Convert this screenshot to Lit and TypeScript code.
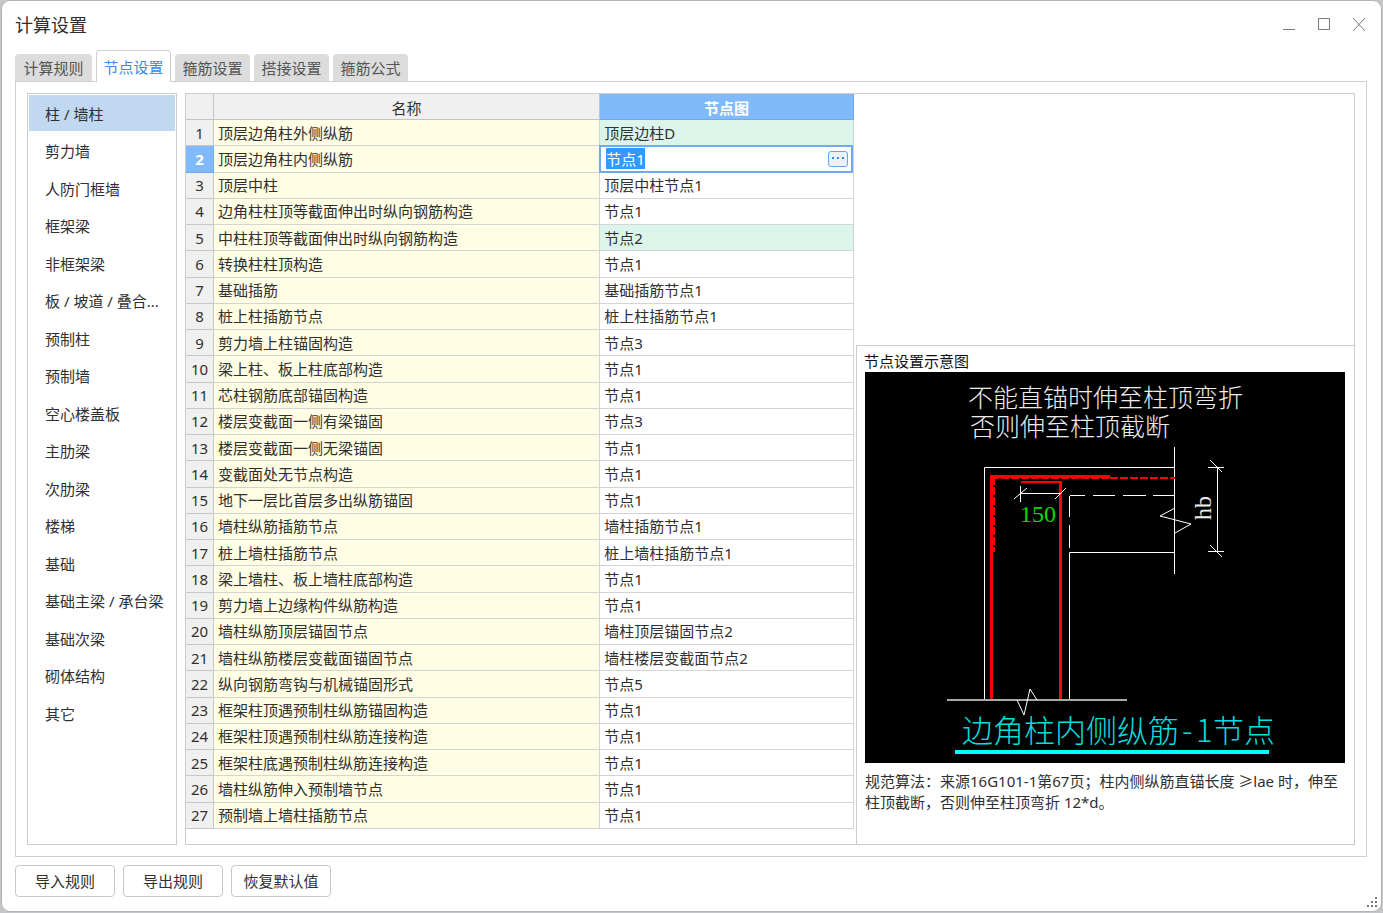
import { LitElement, html, svg, css } from "lit";
import { customElement, state } from "lit/decorators.js";
import { classMap } from "lit/directives/class-map.js";

interface NodeRow {
  name: string;
  node: string;
  changed?: boolean;
}

const TABS = ["计算规则", "节点设置", "箍筋设置", "搭接设置", "箍筋公式"];

const CATEGORIES = [
  "柱 / 墙柱", "剪力墙", "人防门框墙", "框架梁", "非框架梁", "板 / 坡道 / 叠合...",
  "预制柱", "预制墙", "空心楼盖板", "主肋梁", "次肋梁", "楼梯", "基础",
  "基础主梁 / 承台梁", "基础次梁", "砌体结构", "其它",
];

const ROWS: NodeRow[] = [
  { name: "顶层边角柱外侧纵筋", node: "顶层边柱D", changed: true },
  { name: "顶层边角柱内侧纵筋", node: "节点1" },
  { name: "顶层中柱", node: "顶层中柱节点1" },
  { name: "边角柱柱顶等截面伸出时纵向钢筋构造", node: "节点1" },
  { name: "中柱柱顶等截面伸出时纵向钢筋构造", node: "节点2", changed: true },
  { name: "转换柱柱顶构造", node: "节点1" },
  { name: "基础插筋", node: "基础插筋节点1" },
  { name: "桩上柱插筋节点", node: "桩上柱插筋节点1" },
  { name: "剪力墙上柱锚固构造", node: "节点3" },
  { name: "梁上柱、板上柱底部构造", node: "节点1" },
  { name: "芯柱钢筋底部锚固构造", node: "节点1" },
  { name: "楼层变截面一侧有梁锚固", node: "节点3" },
  { name: "楼层变截面一侧无梁锚固", node: "节点1" },
  { name: "变截面处无节点构造", node: "节点1" },
  { name: "地下一层比首层多出纵筋锚固", node: "节点1" },
  { name: "墙柱纵筋插筋节点", node: "墙柱插筋节点1" },
  { name: "桩上墙柱插筋节点", node: "桩上墙柱插筋节点1" },
  { name: "梁上墙柱、板上墙柱底部构造", node: "节点1" },
  { name: "剪力墙上边缘构件纵筋构造", node: "节点1" },
  { name: "墙柱纵筋顶层锚固节点", node: "墙柱顶层锚固节点2" },
  { name: "墙柱纵筋楼层变截面锚固节点", node: "墙柱楼层变截面节点2" },
  { name: "纵向钢筋弯钩与机械锚固形式", node: "节点5" },
  { name: "框架柱顶遇预制柱纵筋锚固构造", node: "节点1" },
  { name: "框架柱顶遇预制柱纵筋连接构造", node: "节点1" },
  { name: "框架柱底遇预制柱纵筋连接构造", node: "节点1" },
  { name: "墙柱纵筋伸入预制墙节点", node: "节点1" },
  { name: "预制墙上墙柱插筋节点", node: "节点1" },
];

const BUTTONS = ["导入规则", "导出规则", "恢复默认值"];

@customElement("node-diagram")
class NodeDiagram extends LitElement {
  static styles = css`
    :host { display: block; }
    .drawing { display: block; width: 100%; height: auto; background: #000; }
    .thin { fill: none; stroke: #fff; stroke-width: 1; }
    .ground { fill: none; stroke: #a8a8a8; stroke-width: 2; }
    .bar { fill: none; stroke: #f00; stroke-width: 3; }
    .hook { fill: none; stroke: #f00; stroke-width: 2; }
    .hidden-bar { fill: none; stroke: #f00; stroke-width: 2; stroke-dasharray: 8 2; }
    .rule { fill: none; stroke: #0ff; stroke-width: 4; }
    .note { fill: #eee; font: 300 25px "Noto Sans CJK SC", sans-serif; }
    .dim { fill: #0d0; font: 24px "Liberation Serif", serif; }
    .depth { fill: #eee; font: 24px "Liberation Serif", serif; }
    .caption { fill: #00dede; font: 300 31px "Noto Sans CJK SC", sans-serif; }
  `;

  render() {
    return html`<svg class="drawing" viewBox="0 0 480 391" role="img" aria-label="边角柱内侧纵筋-1节点">
      ${svg`
        <text class="note" x="103" y="35">不能直锚时伸至柱顶弯折</text>
        <text class="note" x="105" y="64">否则伸至柱顶截断</text>
        <path class="thin" d="M119.5 328V95.5H310 M204.5 328V180.5H310 M309.5 75V202" />
        <path class="thin" d="M205 123.5H220M228 123.5H250M258 123.5H281M288 123.5H310M204.5 124V145M204.5 153V176" />
        <path class="bar" d="M126.5 328V105" />
        <path class="bar" d="M125 104.5H245" />
        <path class="hidden-bar" d="M245 106H310 M129 105V180 M126 106H245" />
        <path class="bar" d="M195.5 328V109" />
        <path class="hook" d="M156 110H197" />
        <path class="thin" d="M156 121.5H195M155.5 114V130M149 127L162 116M190 127L201 116" />
        <text class="dim" x="155" y="150">150</text>
        <path class="thin" d="M310 136L295 144L326 152L310 161" />
        <text class="depth" transform="translate(346 148) rotate(-90)">hb</text>
        <path class="thin" d="M352.5 95V179M343 95.5H359M343 179.5H359M345 88L357 100M345 173L357 185" />
        <path class="ground" d="M82 328H262" />
        <path class="thin" d="M152 328L159 343L165 317L172 328" />
        <text class="caption" x="97" y="370">边角柱内侧纵筋<tspan x="317">-</tspan><tspan x="331">1</tspan><tspan x="348">节点</tspan></text>
        <path class="rule" d="M90 380H404" />`}
    </svg>`;
  }
}

@customElement("app-root")
class AppRoot extends LitElement {
  @state() private tab = 1;
  @state() private category = 0;
  @state() private row = 1;

  static styles = css`
    * { box-sizing: border-box; }
    :host {
      box-sizing: border-box;
      display: block;
      height: 100vh;
      min-height: 840px;
      padding: 0 1px 1px;
      background: #c4c6c8;
      color: #303030;
      font: 15px/20px "Noto Sans", "Noto Sans CJK SC", sans-serif;
    }
    button, input { font: inherit; color: inherit; margin: 0; }
    button { padding: 0; cursor: pointer; }
    .window {
      display: flex; flex-direction: column;
      height: 100%;
      padding: 0 14px 14px 13px;
      background: #fff;
      border: 1px solid #b4b4b4;
      border-radius: 9px;
      position: relative;
    }
    .titlebar { display: flex; justify-content: space-between; align-items: center; height: 48px; }
    .title { margin: 0; font-size: 18px; font-weight: 400; line-height: 24px; }
    .controls { display: flex; gap: 19px; }
    .control { width: 16px; height: 16px; border: 0; background: none; }
    .control svg { display: block; fill: none; stroke: #7c7c7c; stroke-width: 1; }
    .tabs { display: flex; align-items: flex-end; gap: 4px; height: 33px; margin-bottom: -1px; position: relative; }
    .tab {
      height: 27px; width: 75px; margin-bottom: 1px;
      border: 0; border-radius: 4px 4px 0 0;
      background: #dcdcdc; color: #555;
    }
    .tab:first-child { width: 77px; }
    .tab.active {
      height: 32px; margin-bottom: 0;
      border: 1px solid #ccd1d6; border-bottom: 0;
      background: #fff; color: #3a8ae8;
    }
    .panel {
      flex: 1; min-height: 0;
      display: grid; grid-template-columns: 150px minmax(0, 1fr); gap: 8px;
      padding: 11px;
      border: 1px solid #ccd1d6;
    }
    .categories {
      margin: 0; padding: 1px; list-style: none;
      border: 1px solid #ccc;
      display: grid; grid-template-columns: minmax(0, 1fr);
      gap: 2px; grid-auto-rows: 35px 36px; align-content: start;
    }
    .category {
      display: block; width: 100%; height: 36px; padding: 1px 0 0 16px;
      border: 0; background: none; text-align: left;
      white-space: nowrap; overflow: hidden; text-overflow: ellipsis;
    }
    .category.active { background: #c1d8f1; }
    .content {
      display: grid; grid-template-columns: minmax(0, 668fr) minmax(0, 500fr);
      min-height: 0;
      border: 1px solid #ccc;
    }
    .list { min-height: 0; }
    .grid {
      width: 100%; height: calc(100% - 15px);
      table-layout: fixed; border-collapse: separate; border-spacing: 0;
    }
    .col-num { width: 28px; }
    .col-node { width: 38%; }
    th, td {
      padding: 0 4px; text-align: left; font-weight: 400;
      border-right: 1px solid #d4d4d4; border-bottom: 1px solid #d4d4d4;
      white-space: nowrap;
    }
    thead th { height: 26px; padding-top: 2px; background: #f0f0f0; text-align: center; border-color: #c4c4c4; }
    thead th.current { background: #80bafa; color: #fff; font-weight: 700; border-color: #6daaf0; }
    .num { padding: 0; background: #f0f0f0; text-align: center; border-color: #c8c8c8; }
    .num.current { background: #80bafa; color: #fff; font-weight: 700; border-color: #6daaf0; }
    .name { background: #fffde4; }
    .changed { background: #dcf5ea; }
    .cell-edit { position: relative; }
    .editor {
      position: absolute; inset: -1px 0 -1px -1px;
      display: flex; align-items: center;
      padding: 0 3px 0 5px;
      border: 2px solid #6daaf0; background: #fff;
    }
    .editor-input { flex: 1; min-width: 0; height: 22px; padding: 0; border: 0; outline: 0; background: none; }
    .editor-input::selection { background: #3399ff; color: #fff; }
    .more { width: 20px; height: 16px; border: 1px solid #62a5ee; border-radius: 3px; background: #edf1fa; }
    .more svg { display: block; margin: auto; fill: #3a8ae8; }
    .side { display: flex; flex-direction: column; min-height: 0; }
    .preview { flex: 1; min-height: 0; }
    .details {
      min-height: 499px;
      padding: 5px 9px 0 8px;
      border-top: 1px solid #ccc; border-left: 1px solid #ccc;
      margin-left: 2px;
    }
    .details-title { margin: 0 0 1px -1px; font-size: 15px; font-weight: 400; line-height: 20px; color: #111; }
    .details-note { margin: 8px 0 0; line-height: 21px; }
    .footer { display: flex; gap: 8px; margin-top: 8px; }
    .action { width: 100px; height: 32px; border: 1px solid #c8c8c8; border-radius: 4px; background: #fff; }
    .grip { position: absolute; right: 4px; bottom: 4px; fill: #777; }
  `;

  firstUpdated() {
    this.renderRoot.querySelector<HTMLInputElement>(".editor-input")?.select();
  }

  private renderNode(row: NodeRow, index: number) {
    if (index !== this.row) {
      return html`<td class=${classMap({ changed: !!row.changed })} @click=${() => (this.row = index)}>${row.node}</td>`;
    }
    return html`<td class="cell-edit">
      <div class="editor">
        <input class="editor-input" type="text" aria-label=${row.name} .value=${row.node} />
        <button class="more" aria-label="选择节点">
          <svg width="14" height="14" viewBox="0 0 14 14"><path d="M1 5h2v2H1zM6 5h2v2H6zM11 5h2v2h-2z" /></svg>
        </button>
      </div>
    </td>`;
  }

  render() {
    return html`
      <main class="window">
        <header class="titlebar">
          <h1 class="title">计算设置</h1>
          <div class="controls">
            <button class="control" aria-label="最小化"><svg width="16" height="16"><path d="M2 12.5h12" /></svg></button>
            <button class="control" aria-label="最大化"><svg width="16" height="16"><path d="M2.5 1.5h11v11h-11z" /></svg></button>
            <button class="control" aria-label="关闭"><svg width="16" height="16"><path d="M2 1l12 13M14 1L2 14" /></svg></button>
          </div>
        </header>
        <nav class="tabs" role="tablist">
          ${TABS.map((label, i) => html`<button role="tab" aria-selected=${i === this.tab}
            class=${classMap({ tab: true, active: i === this.tab })} @click=${() => (this.tab = i)}>${label}</button>`)}
        </nav>
        <section class="panel">
          <ul class="categories">
            ${CATEGORIES.map((label, i) => html`<li><button
              class=${classMap({ category: true, active: i === this.category })}
              @click=${() => (this.category = i)}>${label}</button></li>`)}
          </ul>
          <div class="content">
            <div class="list">
              <table class="grid">
                <colgroup><col class="col-num" /><col /><col class="col-node" /></colgroup>
                <thead><tr><th></th><th>名称</th><th class="current">节点图</th></tr></thead>
                <tbody>
                  ${ROWS.map((row, i) => html`<tr>
                    <th scope="row" class=${classMap({ num: true, current: i === this.row })}>${i + 1}</th>
                    <td class="name">${row.name}</td>
                    ${this.renderNode(row, i)}
                  </tr>`)}
                </tbody>
              </table>
            </div>
            <div class="side">
              <div class="preview"></div>
              <div class="details">
                <h2 class="details-title">节点设置示意图</h2>
                <node-diagram></node-diagram>
                <p class="details-note">规范算法：来源16G101-1第67页；柱内侧纵筋直锚长度 ≥lae 时，伸至柱顶截断，否则伸至柱顶弯折 12*d。</p>
              </div>
            </div>
          </div>
        </section>
        <footer class="footer">
          ${BUTTONS.map((label) => html`<button class="action">${label}</button>`)}
        </footer>
        <svg class="grip" width="10" height="10" aria-hidden="true">
          <path d="M8 0h2v2H8zM4 4h2v2H4zM8 4h2v2H8zM0 8h2v2H0zM4 8h2v2H4zM8 8h2v2H8z" />
        </svg>
      </main>
    `;
  }
}
